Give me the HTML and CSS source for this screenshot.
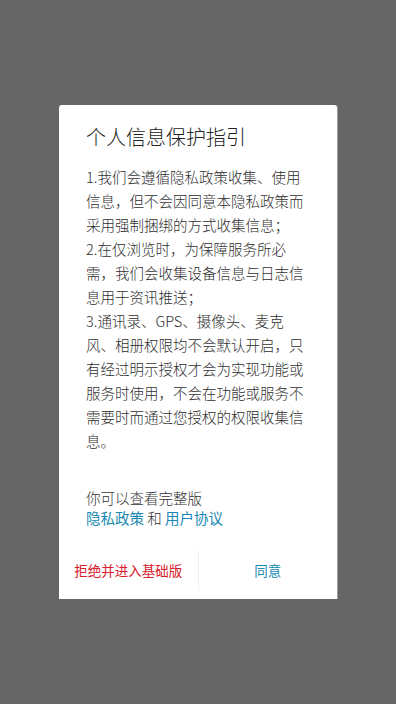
FILE: index.html
```html
<!DOCTYPE html>
<html lang="zh-CN">
<head>
<meta charset="utf-8">
<title>个人信息保护指引</title>
<link rel="stylesheet" href="styles.css">
</head>
<body>
<div class="dialog">
  <h1 class="title">个人信息保护指引</h1>
  <div class="content">
    <p>1.我们会遵循隐私政策收集、使用信息，但不会因同意本隐私政策而采用强制捆绑的方式收集信息；</p>
    <p>2.在仅浏览时，为保障服务所必需，我们会收集设备信息与日志信息用于资讯推送；</p>
    <p>3.通讯录、GPS、摄像头、麦克风、相册权限均不会默认开启，只有经过明示授权才会为实现功能或服务时使用，不会在功能或服务不需要时而通过您授权的权限收集信息。</p>
  </div>
  <div class="footer">
    <div>你可以查看完整版</div>
    <div><span class="link">隐私政策</span> 和 <span class="link">用户协议</span></div>
  </div>
  <div class="actions">
    <div class="btn btn-reject">拒绝并进入基础版</div>
    <div class="divider"></div>
    <div class="btn btn-agree">同意</div>
  </div>
</div>
</body>
</html>
```
FILE: styles.css
```css
html, body {
  margin: 0;
  padding: 0;
}
body {
  background: #666666;
  height: 100vh;
  display: flex;
  align-items: center;
  justify-content: center;
  font-family: "Noto Sans CJK SC", "Noto Sans", sans-serif;
  font-weight: 300;
}
.dialog {
  width: 278px;
  background: #ffffff;
  border-radius: 3px 3px 0 0;
  padding-top: 18px;
  box-shadow: 1px 0 0 #9a9a9a;
}
.title {
  margin: 0;
  padding: 0 27px;
  font-size: 20px;
  line-height: 28px;
  font-weight: 300;
  color: #222222;
}
.content {
  margin-top: 14px;
  padding: 0 27px;
  font-size: 14.5px;
  line-height: 24px;
  color: #2e2e2e;
  line-break: strict;
}
.content p {
  margin: 0;
}
.footer {
  margin-top: 35px;
  padding: 0 27px;
  font-size: 14.5px;
  line-height: 20px;
  color: #333333;
}
.link {
  color: #1789b2;
  font-weight: 400;
}
.actions {
  margin-top: 13px;
  height: 58px;
  display: flex;
  align-items: center;
}
.btn {
  flex: 1;
  text-align: center;
  font-size: 13.5px;
  line-height: 58px;
  font-weight: 400;
}
.btn-reject {
  color: #d8202c;
}
.btn-agree {
  color: #1789b2;
}
.divider {
  width: 1px;
  height: 40px;
  background: #f0f0f0;
}
```
